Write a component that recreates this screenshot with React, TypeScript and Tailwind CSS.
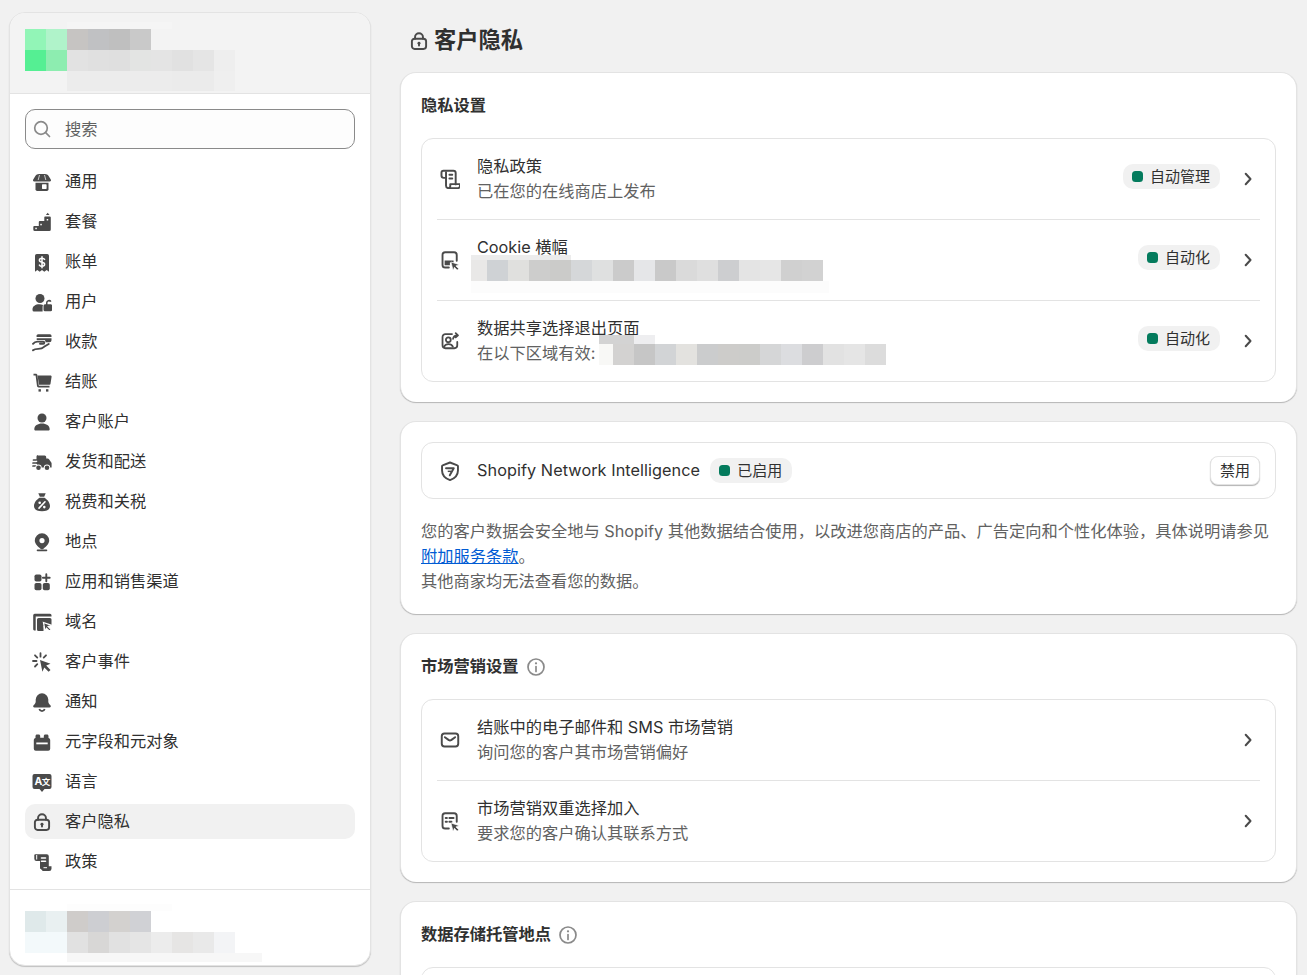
import React from 'react';

type MosaicRow = { height: string; cells: string[] };

const Mosaic = ({ rows, className }: { rows: MosaicRow[]; className: string }) => (
  <div className={`absolute pointer-events-none ${className}`} aria-hidden="true">
    {rows.map((row, i) => (
      <div key={i} className={`flex ${row.height}`}>
        {row.cells.map((cell, j) => (
          <div key={j} className={cell} />
        ))}
      </div>
    ))}
  </div>
);

const OUTLINE_BOX = '1.2 1.2 17.6 17.6';
const WIDE_BOX = '0.6 0.6 19 19';

const Filled = ({ children }: { children: React.ReactNode }) => (
  <svg viewBox="0 0 20 20" className="w-5 h-5 shrink-0 fill-[#4a4a4a]">{children}</svg>
);

const Outline = ({ children, box = OUTLINE_BOX }: { children: React.ReactNode; box?: string }) => (
  <svg viewBox={box} fill="none" stroke="#4a4a4a" strokeWidth="1.7" strokeLinecap="round" strokeLinejoin="round" className="w-5 h-5 shrink-0">
    {children}
  </svg>
);

const StoreIcon = () => (
  <Filled>
    <path d="M7 2h6c1.400 0 3 .9 3.800 2.300l2.100 3.500c.4.700-.1 1.700-1 1.700h-15.800c-.9 0-1.400-1-1-1.700l2.100-3.500c.8-1.400 2.400-2.300 3.800-2.300z" />
    <path d="M7.500 3l-1.300 5M12.500 3l1.300 5" stroke="#fff" strokeWidth=".7" />
    <path d="M3.500 10.700h13v6.500a1.700 1.700 0 0 1-1.700 1.700h-9.600a1.700 1.700 0 0 1-1.700-1.700z" />
    <rect x="10" y="12.300" width="4.600" height="4.600" rx=".6" fill="#fff" />
  </Filled>
);

const PlanIcon = () => (
  <Filled>
    <path d="M15.700 .8l1.800 2.200h-3.600z" />
    <path d="M13.800 4.500h4a1 1 0 0 1 1 1v12a1.500 1.500 0 0 1-1.500 1.500h-14.500a1.500 1.500 0 0 1-1.500-1.500v-2.500a1 1 0 0 1 1-1h4.500v-4a1 1 0 0 1 1-1h4.500v-3.500a1 1 0 0 1 .5-1z" />
    <rect x="3.300" y="15.700" width="1.500" height="1.500" fill="#fff" />
    <rect x="8.300" y="11.800" width="1.500" height="1.500" fill="#fff" />
    <rect x="14.700" y="7" width="1.500" height="1.500" fill="#fff" />
  </Filled>
);

const BillingIcon = () => (
  <Filled>
    <path d="M4.800 2h10.400a1.800 1.800 0 0 1 1.800 1.800v16l-2.300-1.700-2.400 1.700-2.300-1.700-2.300 1.700-2.400-1.700-2.300 1.700v-16a1.800 1.800 0 0 1 1.800-1.800z" />
    <path d="M12.600 7.400c-.5-.8-1.400-1.200-2.600-1.200-1.500 0-2.600.7-2.600 2 0 2.800 5.200 1.300 5.200 4.100 0 1.300-1.100 2-2.600 2-1.200 0-2.100-.4-2.600-1.200M10 4.800v11" stroke="#fff" strokeWidth="1.500" fill="none" strokeLinecap="round" />
  </Filled>
);

const UsersIcon = () => (
  <Filled>
    <circle cx="8" cy="6.500" r="4.500" />
    <path d="M.5 17.200c0-3 3-5 6.700-5 1.400 0 2.800.3 3.900.9-.3.500-.5 1-.5 1.600v4.800h-8.600a1.500 1.500 0 0 1-1.500-1.500z" />
    <path fillRule="evenodd" d="M14 12.300v-1.500a3 3 0 0 1 5.500-1.600l-1.300.8a1.500 1.500 0 0 0-2.700.8v1.500h3.200a1.500 1.500 0 0 1 1.500 1.500v3.900a1.500 1.500 0 0 1-1.500 1.500h-5.700a1.500 1.500 0 0 1-1.500-1.500v-3.900a1.500 1.500 0 0 1 1.500-1.500z" />
  </Filled>
);

const PaymentIcon = () => (
  <Filled>
    <path d="M6.500 2.300h11.500a1.500 1.500 0 0 1 1.500 1.500v1.200h-14.800a1.800 1.800 0 0 1 1.800-2.700zM4.700 6.300h14.800v2a2 2 0 0 1-2 2h-4v-.8c0-.9-.7-1.500-1.600-1.500h-7.200z" />
    <path d="M1 11.800c1.100-1.400 2.500-2.200 4.300-2.200h6c1.300 0 1.300 2.100 0 2.100h-3.300M1 18.300c1.600-1.400 3.200-1.400 5.300-1.400 2.600 0 4.200-.5 5.800-2.100l4.600-2.800" fill="none" stroke="#4a4a4a" strokeWidth="1.900" strokeLinecap="round" />
  </Filled>
);

const CartIcon = () => (
  <Filled>
    <path d="M1.500 1.800h2.300c.8 0 1.500.6 1.600 1.400l1.400 10.600h10.700v1.700h-10.900c-.8 0-1.500-.6-1.600-1.400l-1.400-10.600h-2.100z" />
    <path d="M5.500 3.500h13c.7 0 1.200.6 1.100 1.300l-1.100 7c-.1.600-.6 1-1.200 1h-10.300z" />
    <rect x="6.500" y="17.200" width="2.400" height="2.400" />
    <rect x="14" y="17.200" width="2.400" height="2.400" />
  </Filled>
);

const PersonIcon = () => (
  <Filled>
    <circle cx="10" cy="6" r="4.500" />
    <path d="M2.300 17.200c0-3.400 3.400-5.600 7.700-5.600s7.700 2.200 7.700 5.600c0 .8-.6 1.400-1.400 1.400h-12.600c-.8 0-1.400-.6-1.400-1.400z" />
  </Filled>
);

const TruckIcon = () => (
  <Filled>
    <path d="M6 3.500h6.700a1.500 1.500 0 0 1 1.500 1.500v1.500h1.500c.5 0 1 .3 1.300.7l2.300 3.300c.2.300.3.600.3.900v4.100h-15.100v-11a1.500 1.500 0 0 1 1.500-1.500z" />
    <path d="M1.500 8h6M1 11h7M1 14h4" stroke="#4a4a4a" strokeWidth="1.700" strokeLinecap="round" />
    <path d="M4 9.400h1.200M4 12.500h1.200" stroke="#fff" strokeWidth="1.200" />
    <circle cx="6.500" cy="15.800" r="3.200" fill="#fff" />
    <circle cx="6.500" cy="15.800" r="2.300" />
    <circle cx="15" cy="15.800" r="3.200" fill="#fff" />
    <circle cx="15" cy="15.800" r="2.300" />
  </Filled>
);

const TaxIcon = () => (
  <Filled>
    <path d="M6.300 1.300h7.400l-1.500 3.400h-4.400z" />
    <path d="M7.500 5.700h5c3 1.900 5.500 5 5.500 8.300 0 3.300-2.900 5.300-8 5.300s-8-2-8-5.300c0-3.300 2.500-6.400 5.500-8.300z" />
    <path d="M13 9.800l-6 6.300" stroke="#fff" strokeWidth="1.600" strokeLinecap="round" />
    <circle cx="7.700" cy="10.700" r="1.300" fill="#fff" />
    <circle cx="12.300" cy="15.100" r="1.300" fill="#fff" />
  </Filled>
);

const PinIcon = () => (
  <Filled>
    <path fillRule="evenodd" d="M10 1.300a7.200 7.200 0 0 1 7.200 7.200c0 3.100-3 6.100-5.700 8.200a2.400 2.400 0 0 1-3 0c-2.700-2.100-5.700-5.100-5.700-8.200a7.200 7.200 0 0 1 7.200-7.200zm0 4.700a2.600 2.600 0 1 0 0 5.200 2.600 2.600 0 0 0 0-5.200z" />
    <rect x="4.700" y="17.500" width="10.600" height="1.700" rx=".85" />
  </Filled>
);

const AppsIcon = () => (
  <Filled>
    <rect x="2.500" y="2.500" width="7" height="7" rx="1.800" />
    <rect x="2.500" y="11" width="7" height="7.300" rx="1.800" />
    <rect x="10.800" y="11" width="7" height="7.300" rx="1.800" />
    <path d="M14.300 2.300v6.900M10.900 5.800h6.800" stroke="#4a4a4a" strokeWidth="1.900" strokeLinecap="round" />
  </Filled>
);

const DomainIcon = () => (
  <Filled>
    <path d="M2.500 1.800h15.500a1.500 1.500 0 0 1 1.500 1.500v1.200h-15.800v14h-1.500a1.200 1.200 0 0 1-1-1.200v-14a1.500 1.500 0 0 1 1.500-1.500z" />
    <path d="M6.500 6h11.500a1.500 1.500 0 0 1 1.500 1.500v6.500h-8v5h-5a1.500 1.500 0 0 1-1.500-1.500v-10a1.500 1.500 0 0 1 1.500-1.500z" />
    <path d="M11.500 10.500l7.900 2.800-3.200 1.300 3 3-1.700 1.700-3-3-1.400 3.100z" stroke="#fff" strokeWidth="1.300" />
  </Filled>
);

const EventsIcon = () => (
  <Filled>
    <path d="M8 8l10.500 3.800-4.300 1.800 4.300 4.300-1.900 1.900-4.300-4.300-1.900 4.300z" />
    <path d="M8.500 1.200v3.500M3 3.300l2.300 2.300M1 9h3.500M14 3.300l-2.300 2.300M3 14.500l2.300-2.300" stroke="#4a4a4a" strokeWidth="1.800" strokeLinecap="round" />
  </Filled>
);

const BellIcon = () => (
  <Filled>
    <path d="M10 1.300a6.300 6.300 0 0 1 6.300 6.300v2.200c0 .9.400 1.700 1.100 2.400l1 1c.9.900.3 2.300-.9 2.300h-15c-1.200 0-1.800-1.400-.9-2.300l1-1c.7-.7 1.100-1.500 1.100-2.400v-2.200a6.300 6.300 0 0 1 6.300-6.300z" />
    <path d="M7.300 17a2.800 2.800 0 0 0 5.400 0" fill="none" stroke="#4a4a4a" strokeWidth="1.700" />
  </Filled>
);

const MetafieldIcon = () => (
  <Filled>
    <path d="M5 2.500h1.700c.8 0 1.500.7 1.500 1.500v1.800h3.600v-1.800c0-.8.700-1.500 1.500-1.500h1.700c.8 0 1.500.7 1.500 1.500v1.900c1 .3 1.700 1.100 1.700 2.200v8.600a2 2 0 0 1-2 2h-12.400a2 2 0 0 1-2-2v-8.600c0-1.100.7-1.900 1.700-2.200v-1.900c0-.8.700-1.500 1.500-1.500z" />
    <rect x="4.300" y="10.500" width="11.400" height="1.800" fill="#fff" />
  </Filled>
);

const LanguageIcon = () => (
  <svg viewBox="0 0 20 20" className="w-5 h-5 shrink-0">
    <path fill="#4a4a4a" d="M2.500 2h15a2 2 0 0 1 2 2v11a2 2 0 0 1-2 2h-5l-2.500 3-2.500-3h-5a2 2 0 0 1-2-2v-11a2 2 0 0 1 2-2z" />
    <text x="2.400" y="13.200" fontSize="10.500" fontWeight="700" fill="#fff" fontFamily="Inter, sans-serif">A</text>
    <text x="9.800" y="13.200" fontSize="8.500" fontWeight="700" fill="#fff" fontFamily="'Noto Sans CJK SC', sans-serif">文</text>
  </svg>
);

const LockIcon = () => (
  <Outline>
    <path d="M6.500 8v-1.250a3.500 3.500 0 1 1 7 0v1.250" />
    <rect x="3.750" y="8" width="12.500" height="9" rx="2.300" />
    <circle cx="10" cy="12" r="1.300" fill="#4a4a4a" stroke="none" />
    <path d="M10 12.300v1.700" />
  </Outline>
);

const PolicyFilledIcon = () => (
  <Filled>
    <path d="M2.800 2.200h12a2 2 0 0 1 2 2v10h2.700v2.500a2.300 2.300 0 0 1-2.300 2.300h-6.500l-2-2.200h-.7v-7.800h-3.500a2.200 2.200 0 0 1-2.200-2.200v-2.500a2.200 2.200 0 0 1 .5-2.100z" />
    <path d="M9.500 6h4M9.500 9.200h4" stroke="#fff" strokeWidth="1.600" strokeLinecap="round" />
    <path d="M4.700 3v4.500" stroke="#fff" strokeWidth="1" />
    <path d="M11.500 15.700h3.500" stroke="#fff" strokeWidth="1" />
  </Filled>
);

const ScrollIcon = () => (
  <Outline>
    <path d="M6.500 9h-2a2 2 0 0 1-2-2v-2.500a1.750 1.750 0 0 1 1.750-1.750h8.750a2 2 0 0 1 2 2v10" />
    <path d="M6.500 4v12a2 2 0 0 0 2 2h8.500a1.750 1.750 0 0 0 1.750-1.750v-1.750h-8.500v1.750a1.750 1.750 0 0 1-1.750 1.750" />
    <path d="M9.500 6.250h2.500M9.500 9.500h2.500" />
  </Outline>
);

const BannerIcon = () => (
  <svg viewBox={WIDE_BOX} className="w-5 h-5 shrink-0">
    <path d="M9 17.250h-3.500a2.500 2.500 0 0 1-2.500-2.500v-9.500a2.500 2.500 0 0 1 2.500-2.500h8.500a2.500 2.500 0 0 1 2.500 2.500v5.500" fill="none" stroke="#4a4a4a" strokeWidth="1.800" strokeLinecap="round" />
    <path d="M5 10.500h8.500v2h-3.500v2.500h-5z" fill="#4a4a4a" />
    <path d="M11 12l7.800 2.500-3.100 1.200 2.700 2.600-1.500 1.400-2.600-2.700-1.200 3.100z" fill="#4a4a4a" stroke="#fff" strokeWidth=".6" />
  </svg>
);

const OptOutIcon = () => (
  <Outline box={WIDE_BOX}>
    <path d="M12 3.500h-6.250a2.750 2.750 0 0 0-2.750 2.750v8a2.750 2.750 0 0 0 2.750 2.750h8.500a2.750 2.750 0 0 0 2.750-2.750v-3.250" />
    <circle cx="8.500" cy="9" r="2.300" />
    <path d="M4.500 15.500c.8-1.700 2.200-2.500 4.200-2.500s3.400.8 4.100 2.500" />
    <path d="M13 8c.3-2.200 1.800-3.300 4.300-3.300M15.500 2.700l2.200 2-2.200 2" />
  </Outline>
);

const ShieldIcon = () => (
  <svg viewBox={OUTLINE_BOX} className="w-5 h-5 shrink-0">
    <path d="M10 2.500l6.500 2.500c.3.100.5.400.5.700v3.800c0 3.800-2.600 6.900-7 8.500-4.400-1.600-7-4.700-7-8.500v-3.800c0-.3.200-.6.500-.7z" fill="none" stroke="#4a4a4a" strokeWidth="1.700" strokeLinejoin="round" />
    <path d="M6.500 7.500h6.800l-3.500 6.300" fill="none" stroke="#4a4a4a" strokeWidth="1.700" strokeLinejoin="round" strokeLinecap="round" />
    <path d="M8 10.300h3" stroke="#4a4a4a" strokeWidth="1.300" />
  </svg>
);

const MailIcon = () => (
  <Outline>
    <rect x="2.750" y="4.250" width="14.500" height="11.500" rx="2.400" />
    <path d="M5.500 7.500l3.500 2.600c.6.500 1.400.5 2 0l3.500-2.600" />
  </Outline>
);

const FormIcon = () => (
  <svg viewBox={WIDE_BOX} className="w-5 h-5 shrink-0">
    <path d="M9 17.250h-3.500a2.500 2.500 0 0 1-2.500-2.500v-9.500a2.500 2.500 0 0 1 2.500-2.500h8.500a2.500 2.500 0 0 1 2.500 2.500v5.500" fill="none" stroke="#4a4a4a" strokeWidth="1.800" strokeLinecap="round" />
    <path d="M6 7.250h1.200M9.500 7.250h4M6 10.750h1.200M9.500 10.750h2" stroke="#4a4a4a" strokeWidth="1.800" strokeLinecap="round" />
    <path d="M11 12l7.800 2.500-3.100 1.200 2.700 2.600-1.500 1.400-2.600-2.700-1.200 3.100z" fill="#4a4a4a" stroke="#fff" strokeWidth=".6" />
  </svg>
);

const ChevronIcon = () => (
  <svg viewBox="0 0 20 20" fill="none" stroke="#4a4a4a" strokeWidth="2" strokeLinecap="round" strokeLinejoin="round" className="w-5 h-5 shrink-0">
    <path d="M7.700 4.800l4.800 5.200-4.800 5.200" />
  </svg>
);

const InfoIcon = () => (
  <svg viewBox="0 0 20 20" className="w-5 h-5 shrink-0">
    <circle cx="10" cy="10" r="8" fill="none" stroke="#8a8a8a" strokeWidth="1.700" />
    <circle cx="10" cy="6.300" r="1.150" fill="#8a8a8a" />
    <path d="M10 9.500v5" stroke="#8a8a8a" strokeWidth="1.700" strokeLinecap="round" />
  </svg>
);

const navItems: { label: string; icon: React.ReactNode; active?: boolean }[] = [
  { label: '通用', icon: <StoreIcon /> },
  { label: '套餐', icon: <PlanIcon /> },
  { label: '账单', icon: <BillingIcon /> },
  { label: '用户', icon: <UsersIcon /> },
  { label: '收款', icon: <PaymentIcon /> },
  { label: '结账', icon: <CartIcon /> },
  { label: '客户账户', icon: <PersonIcon /> },
  { label: '发货和配送', icon: <TruckIcon /> },
  { label: '税费和关税', icon: <TaxIcon /> },
  { label: '地点', icon: <PinIcon /> },
  { label: '应用和销售渠道', icon: <AppsIcon /> },
  { label: '域名', icon: <DomainIcon /> },
  { label: '客户事件', icon: <EventsIcon /> },
  { label: '通知', icon: <BellIcon /> },
  { label: '元字段和元对象', icon: <MetafieldIcon /> },
  { label: '语言', icon: <LanguageIcon /> },
  { label: '客户隐私', icon: <LockIcon />, active: true },
  { label: '政策', icon: <PolicyFilledIcon /> },
];

const Badge = ({ label, raised }: { label: string; raised?: boolean }) => (
  <span className={`flex items-center gap-[7px] h-[25px] pl-[9px] pr-[10px] rounded-[10px] bg-[#f1f1f1] text-[15px] text-[#303030] shrink-0 ${raised ? 'mb-[5px]' : ''}`}>
    <span className="w-[11px] h-[11px] rounded-[3.5px] bg-[#047b5d]" />
    <span className="pt-px">{label}</span>
  </span>
);

const SettingRow = ({ icon, title, subtitle, badge, children }: { icon: React.ReactNode; title: string; subtitle?: string; badge?: string; children?: React.ReactNode }) => (
  <div className="relative flex items-center h-20 pl-[18px] pr-[17px]">
    {icon}
    <div className="flex-1 ml-[17px] leading-[25px]">
      <div className="text-[#303030]">{title}</div>
      <div className="h-[25px] text-[#616161]">{subtitle}</div>
    </div>
    {badge && <Badge label={badge} raised />}
    <div className="ml-[18px]">
      <ChevronIcon />
    </div>
    {children}
  </div>
);

const Divider = () => <div className="h-px ml-[15px] mr-[15px] bg-[#e3e3e3]" />;

const Card = ({ children }: { children: React.ReactNode }) => (
  <section className="p-5 bg-white rounded-2xl border-x border-t border-[#e3e3e3] shadow-[0_1px_1px_rgba(0,0,0,0.25)]">{children}</section>
);

const ListBox = ({ children }: { children: React.ReactNode }) => (
  <div className="rounded-xl border border-[#e3e3e3]">{children}</div>
);

const headerMosaic: MosaicRow[] = [
  { height: 'h-[7px]', cells: ['w-[42px]', 'w-[105px] bg-[#f5f5f5]'] },
  { height: 'h-[21px]', cells: ['w-[21px] bg-[#92f5b7]', 'w-[21px] bg-[#b0f3ca]', 'w-[21px] bg-[#c6c4c2]', 'w-[21px] bg-[#c0c1c3]', 'w-[21px] bg-[#bfbfbf]', 'w-[21px] bg-[#c9c9c9]'] },
  { height: 'h-[21px]', cells: ['w-[21px] bg-[#55ef93]', 'w-[21px] bg-[#8dedb0]', 'w-[21px] bg-[#e2e2e2]', 'w-[21px] bg-[#e0e0e0]', 'w-[21px] bg-[#dfdfdf]', 'w-[21px] bg-[#e3e4e3]', 'w-[21px] bg-[#e4e4e4]', 'w-[21px] bg-[#e1e1e1]', 'w-[21px] bg-[#e5e5e5]', 'w-[21px] bg-[#eeeeee]'] },
  { height: 'h-[20px]', cells: ['w-[42px]', 'w-[105px] bg-[#ececec]', 'w-[42px] bg-[#ebebeb]', 'w-[21px] bg-[#efefef]'] },
];

const footerMosaic: MosaicRow[] = [
  { height: 'h-[7px]', cells: ['w-[42px]', 'w-[105px] bg-[#fdfdfd]'] },
  { height: 'h-[21px]', cells: ['w-[21px] bg-[#dfe9ea]', 'w-[21px] bg-[#e9f0f1]', 'w-[21px] bg-[#cfccca]', 'w-[21px] bg-[#cdced2]', 'w-[21px] bg-[#d3d1cf]', 'w-[21px] bg-[#d0d1d5]'] },
  { height: 'h-[21px]', cells: ['w-[21px] bg-[#f3f9fb]', 'w-[21px] bg-[#f3f9fb]', 'w-[21px] bg-[#e1e1e1]', 'w-[21px] bg-[#d8d7d6]', 'w-[21px] bg-[#e1e1e1]', 'w-[21px] bg-[#e5e5e5]', 'w-[21px] bg-[#ececec]', 'w-[21px] bg-[#e6e5e4]', 'w-[21px] bg-[#e9e9e9]', 'w-[21px] bg-[#f3f4f6]'] },
  { height: 'h-[9px]', cells: ['w-[42px]', 'w-[195px] bg-[#f7f7f7]'] },
];

const cookieMosaic: MosaicRow[] = [
  { height: 'h-[5px]', cells: ['w-[100px] bg-[#ececec]'] },
  { height: 'h-[21px]', cells: ['w-[16px] bg-[#e9e8e7]', 'w-[21px] bg-[#cfd2d5]', 'w-[21px] bg-[#e0e0de]', 'w-[21px] bg-[#cdcdcc]', 'w-[21px] bg-[#cbcbc9]', 'w-[21px] bg-[#d5d7d9]', 'w-[21px] bg-[#dfe0e0]', 'w-[21px] bg-[#cbcbcb]', 'w-[21px] bg-[#e5e6e8]', 'w-[21px] bg-[#c9c9c9]', 'w-[21px] bg-[#dadada]', 'w-[21px] bg-[#dfdfdf]', 'w-[21px] bg-[#cdced0]', 'w-[21px] bg-[#e4e4e4]', 'w-[21px] bg-[#e6e6e6]', 'w-[21px] bg-[#d0d0d0]', 'w-[21px] bg-[#d2d2d2]'] },
  { height: 'h-[12px]', cells: ['w-[358px] bg-[#fcfcfc]'] },
];

const regionMosaic: MosaicRow[] = [
  { height: 'h-[9px]', cells: ['w-[35px] bg-[#d3d3d3]', 'w-[21px] bg-[#eeeef0]'] },
  { height: 'h-[21px]', cells: ['w-[14px] bg-[#f8f8f6]', 'w-[21px] bg-[#d3d2d1]', 'w-[21px] bg-[#c6c6c6]', 'w-[21px] bg-[#d2d4d6]', 'w-[21px] bg-[#e3e2df]', 'w-[21px] bg-[#cbcccd]', 'w-[21px] bg-[#cdccca]', 'w-[21px] bg-[#ccccca]', 'w-[21px] bg-[#d5d6d7]', 'w-[21px] bg-[#dcdde0]', 'w-[21px] bg-[#cdcdcf]', 'w-[21px] bg-[#e2e2e2]', 'w-[21px] bg-[#e5e5e5]', 'w-[21px] bg-[#dcdcdc]'] },
];

export default function App() {
  return (
    <div className="flex h-[975px] overflow-hidden bg-[#f1f1f1] text-[16.25px] text-[#303030] font-['Inter','Noto_Sans_CJK_SC',sans-serif]">
      <aside className="relative flex flex-col w-[362px] h-[954px] ml-[9px] mt-[12px] shrink-0 rounded-2xl border border-[#e3e3e3] bg-white shadow-[0_1px_1px_rgba(0,0,0,0.2)] overflow-hidden">
        <div className="relative h-[81px] shrink-0 bg-[#f3f3f3] border-b border-[#e3e3e3]">
          <Mosaic rows={headerMosaic} className="left-[15px] top-[9px]" />
        </div>
        <div className="flex-1 pl-[15px] pr-[15px] pt-[15px]">
          <label className="flex items-center gap-[13px] h-10 px-[6px] rounded-[10px] border border-[#8a8a8a] bg-[#fdfdfd]">
            <svg viewBox="0 0 20 20" fill="none" stroke="#8a8a8a" strokeWidth="1.700" strokeLinecap="round" className="w-5 h-5 shrink-0">
              <circle cx="9" cy="9" r="6.300" />
              <path d="M13.700 13.700l3.800 3.800" />
            </svg>
            <input placeholder="搜索" className="flex-1 min-w-0 bg-transparent outline-none placeholder:text-[#616161]" />
          </label>
          <nav className="flex flex-col gap-[5px] mt-[15px]">
            {navItems.map(item => (
              <div
                key={item.label}
                className={`flex items-center gap-[13px] h-[35px] px-[7px] rounded-[10px] ${item.active ? 'bg-[#f1f1f1]' : ''}`}
              >
                {item.icon}
                <span className="mb-px">{item.label}</span>
              </div>
            ))}
          </nav>
        </div>
        <div className="relative h-[76px] shrink-0 border-t border-[#e3e3e3]">
          <Mosaic rows={footerMosaic} className="left-[15px] top-[14px]" />
        </div>
      </aside>

      <main className="flex-1 min-w-0 ml-[29px] mr-[10px]">
        <div className="flex items-center gap-[5px] h-[72px] pl-[9px] pt-[8px]">
          <div className="mt-[2px]">
            <LockIcon />
          </div>
          <h1 className="text-[22.25px] font-bold">客户隐私</h1>
        </div>
        <div className="flex flex-col gap-[19px]">
          <Card>
            <h2 className="font-semibold leading-[25px] mb-5">隐私设置</h2>
            <ListBox>
              <SettingRow icon={<ScrollIcon />} title="隐私政策" subtitle="已在您的在线商店上发布" badge="自动管理" />
              <Divider />
              <SettingRow icon={<BannerIcon />} title="Cookie 横幅" badge="自动化">
                <Mosaic rows={cookieMosaic} className="left-[49px] top-[35px]" />
              </SettingRow>
              <Divider />
              <SettingRow icon={<OptOutIcon />} title="数据共享选择退出页面" subtitle="在以下区域有效:" badge="自动化">
                <Mosaic rows={regionMosaic} className="left-[177px] top-[34px]" />
              </SettingRow>
            </ListBox>
          </Card>

          <Card>
            <ListBox>
              <div className="flex items-center h-[55px] pl-[18px] pr-[15px]">
                <ShieldIcon />
                <span className="ml-[17px] tracking-[0.06px]">Shopify Network Intelligence</span>
                <span className="ml-[10px]">
                  <Badge label="已启用" />
                </span>
                <button className="ml-auto w-[50px] h-[29px] pt-px rounded-lg bg-white border border-[#e3e3e3] shadow-[0_1px_1px_rgba(0,0,0,0.3)] text-[15px]">禁用</button>
              </div>
            </ListBox>
            <p className="mt-5 leading-[25px] text-[#616161]">
              您的客户数据会安全地与 Shopify 其他数据结合使用，以改进您商店的产品、广告定向和个性化体验，具体说明请参见
              <a href="#terms" className="text-[#005bd3] underline">附加服务条款</a>。
              <br />
              其他商家均无法查看您的数据。
            </p>
          </Card>

          <Card>
            <div className="flex items-center gap-[7px] h-[25px] mb-5">
              <h2 className="font-semibold">市场营销设置</h2>
              <InfoIcon />
            </div>
            <ListBox>
              <SettingRow icon={<MailIcon />} title="结账中的电子邮件和 SMS 市场营销" subtitle="询问您的客户其市场营销偏好" />
              <Divider />
              <SettingRow icon={<FormIcon />} title="市场营销双重选择加入" subtitle="要求您的客户确认其联系方式" />
            </ListBox>
          </Card>

          <Card>
            <div className="flex items-center gap-[7px] h-[25px] mb-5">
              <h2 className="font-semibold">数据存储托管地点</h2>
              <InfoIcon />
            </div>
            <ListBox>
              <div className="h-20" />
            </ListBox>
          </Card>
        </div>
      </main>
    </div>
  );
}
